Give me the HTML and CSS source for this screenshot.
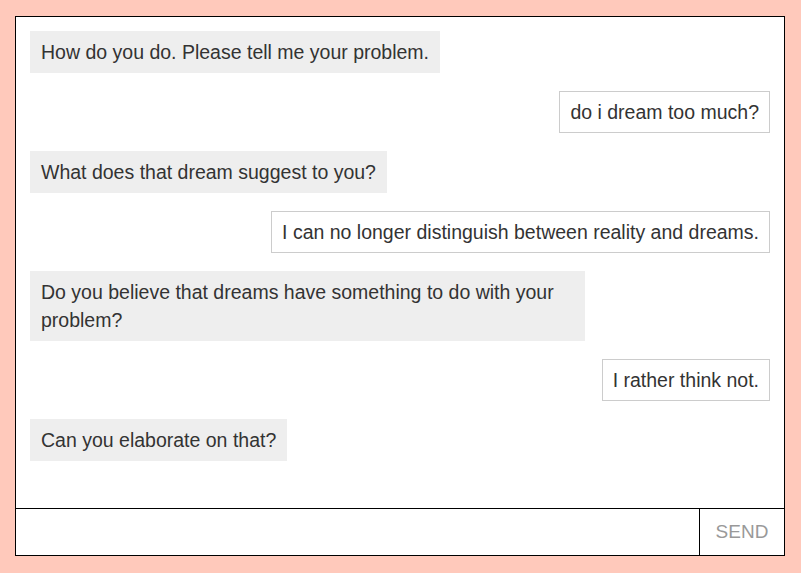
FILE: index.html
```html
<!DOCTYPE html>
<html>
<head>
<meta charset="utf-8">
<link rel="stylesheet" href="styles.css">
</head>
<body>
<div class="chat">
  <div class="messages">
    <div class="msg bot">How do you do. Please tell me your problem.</div>
    <div class="msg user">do i dream too much?</div>
    <div class="msg bot">What does that dream suggest to you?</div>
    <div class="msg user">I can no longer distinguish between reality and dreams.</div>
    <div class="msg bot">Do you believe that dreams have something to do with your problem?</div>
    <div class="msg user">I rather think not.</div>
    <div class="msg bot">Can you elaborate on that?</div>
  </div>
  <div class="composer">
    <input class="field" type="text">
    <button class="send">SEND</button>
  </div>
</div>
</body>
</html>
```
FILE: styles.css
```css
html, body {
  margin: 0;
}
body {
  background: #ffc9bb;
  height: 573px;
  padding: 16px 0 0 15px;
  box-sizing: border-box;
  font-family: "Liberation Sans", Arial, sans-serif;
}
.chat {
  box-sizing: border-box;
  width: 770px;
  height: 540px;
  background: #fff;
  border: 1px solid #000;
  display: flex;
  flex-direction: column;
}
.messages {
  flex: 1;
  padding: 14px;
  display: flex;
  flex-direction: column;
  align-items: flex-start;
  gap: 18.5px;
  overflow: hidden;
}
.msg {
  max-width: 75%;
  box-sizing: border-box;
  font-size: 19.5px;
  line-height: 28px;
  color: #333;
  padding: 5.75px 10px;
  border: 1px solid #eee;
  background: #eee;
}
.msg.user {
  align-self: flex-end;
  background: #fff;
  border-color: #ccc;
}
.composer {
  height: 46px;
  border-top: 1px solid #000;
  display: flex;
}
.field {
  flex: 1;
  border: 0;
  margin: 0;
  padding: 0 10px;
  font: inherit;
  font-size: 19px;
  outline: none;
  background: transparent;
}
.send {
  width: 85px;
  border: 0;
  border-left: 1px solid #000;
  margin: 0;
  background: #fff;
  color: #999;
  font-family: "Liberation Sans", Arial, sans-serif;
  font-size: 19px;
  padding: 0;
}
```
